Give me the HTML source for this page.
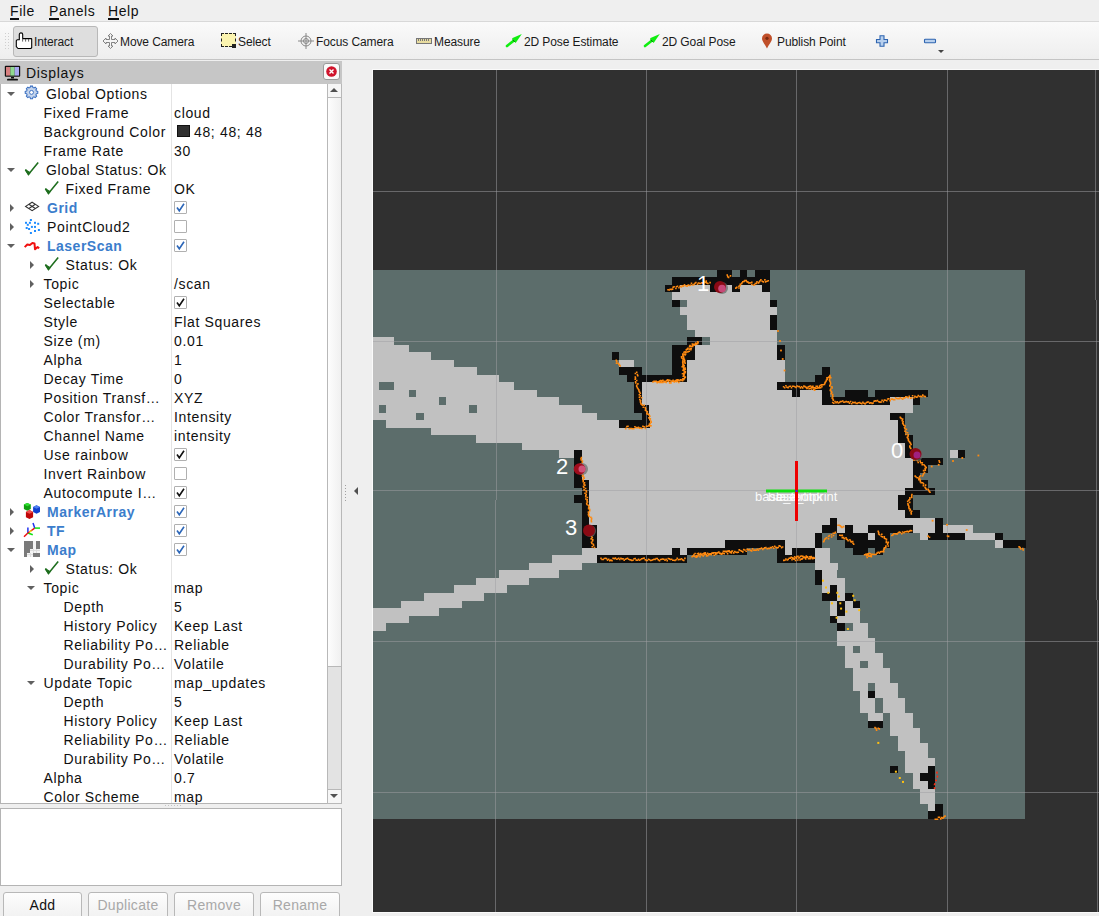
<!DOCTYPE html>
<html><head><meta charset="utf-8">
<style>
*{box-sizing:border-box;margin:0;padding:0}
html,body{width:1099px;height:916px;overflow:hidden;background:#efefef;font-family:"Liberation Sans",sans-serif;color:#000;position:relative}
.a{position:absolute;white-space:nowrap}
#menu{position:absolute;left:0;top:0;width:1099px;height:21px;background:#efefef}
#menu span{position:absolute;top:2px;font-size:14px;line-height:19px;letter-spacing:0.6px;color:#101010}
#menu u{text-decoration:none;border-bottom:2px solid #101010;display:inline-block;line-height:14px}
#menuline{position:absolute;left:0;top:21px;width:1099px;height:1px;background:#d8d8d8}
#tb{position:absolute;left:0;top:22px;width:1099px;height:37px;background:linear-gradient(#fafafa,#eeeeee)}
#tbline{position:absolute;left:0;top:59px;width:1099px;height:1px;background:#c4c4c4}
.tt{position:absolute;top:34px;font-size:12px;line-height:16px;letter-spacing:-0.1px;color:#1a1a1a;white-space:nowrap}
.ti{position:absolute}
#title{position:absolute;left:0;top:61px;width:342px;height:23px;background:#c6c6c6}
#tree{position:absolute;left:0;top:84px;width:342px;height:720px;background:#fff;border:1px solid #b4b4b4;border-top:none;overflow:hidden}
.r{position:absolute;font-size:14px;line-height:19px;letter-spacing:0.65px;color:#101010;white-space:nowrap}
.b{font-weight:bold;color:#3b7dcc;letter-spacing:0.5px}
.cb{position:absolute;left:174px;width:13px;height:13px;border:1px solid #b0b0b0;background:#fff;border-radius:1px}
.ar{position:absolute;width:0;height:0}
.dn{border-left:4px solid transparent;border-right:4px solid transparent;border-top:4px solid #606060}
.rt{border-top:4px solid transparent;border-bottom:4px solid transparent;border-left:4px solid #606060}
.btn{position:absolute;top:892px;height:30px;border:1px solid #b8b8b8;border-radius:3px;background:linear-gradient(#fdfdfd,#f0f0f0);font-size:14px;line-height:24px;text-align:center;letter-spacing:0.3px}
</style></head><body>
<div id="menu">
<span style="left:10px"><u>F</u>ile</span>
<span style="left:49px"><u>P</u>anels</span>
<span style="left:108px"><u>H</u>elp</span>
</div>
<div id="menuline"></div>
<div id="tb"></div>
<div id="tbline"></div>
<!-- toolbar grip -->
<div class="a" style="left:4px;top:32px;width:6px;height:18px;background-image:radial-gradient(circle at 1.5px 1.5px,#cfcfcf 0.7px,transparent 0.9px);background-size:3px 3px"></div>
<div class="a" style="left:13px;top:26px;width:85px;height:31px;border:1px solid #b8b8b8;border-radius:3px;background:#dedede"></div>
<svg class="ti" style="left:14px;top:32px" width="20" height="18" viewBox="14 32 20 18"><path d="M19.3 39.8V34.6a1.7 1.7 0 0 1 3.4 0V38.6H31.2a0.5 0.5 0 0 1 0.5 0.5V47.6L30.8 48.5H18L16.3 46.6V40.6L17.1 39.8z" fill="#fff" stroke="#000" stroke-width="1.1" stroke-linejoin="round"/><path d="M22.6 39V41.6M25.6 39V41.6M28.6 39V41.6" stroke="#555" stroke-width="0.9"/></svg>
<div class="tt" style="left:34px">Interact</div>
<svg class="ti" style="left:102px;top:33px" width="17" height="16" viewBox="0 0 17 16"><g fill="#f4f4f4" stroke="#777" stroke-width="0.9"><path d="M8.5 0.5L11 3H9.5V6.5H13V5L16 8L13 11V9.5H9.5V13H11L8.5 15.5L6 13H7.5V9.5H4V11L1 8L4 5V6.5H7.5V3H6z"/></g></svg>
<div class="tt" style="left:120px">Move Camera</div>
<div class="a" style="left:221px;top:33px;width:15px;height:14px;background:#fbf4b0;border:1px dashed #222"></div>
<div class="a" style="left:232px;top:44px;width:4px;height:4px;background:#222"></div>
<div class="tt" style="left:238px">Select</div>
<svg class="ti" style="left:297px;top:32px" width="18" height="18" viewBox="0 0 18 18"><g fill="none" stroke="#888" stroke-width="1"><circle cx="9" cy="9" r="5"/><circle cx="9" cy="9" r="2.5"/><path d="M9 1V17M1 9H17"/></g></svg>
<div class="tt" style="left:316px">Focus Camera</div>
<div class="a" style="left:416px;top:38px;width:16px;height:6px;background:#e8dca0;border:1px solid #777"></div>
<div class="a" style="left:418px;top:38px;width:12px;height:3px;background-image:linear-gradient(90deg,#777 1px,transparent 1px);background-size:2px 3px"></div>
<div class="tt" style="left:434px">Measure</div>
<svg class="ti" style="left:505px;top:33px" width="18" height="16" viewBox="505 33 18 16"><path d="M507 46L514 40.5" stroke="#10ee10" stroke-width="2.6" stroke-linecap="round"/><path d="M512 38.2L521.8 34L515.6 43z" fill="#10ee10"/><path d="M512.5 39.5L514.8 42" stroke="#0a7a0a" stroke-width="1"/></svg>
<div class="tt" style="left:524px">2D Pose Estimate</div>
<svg class="ti" style="left:643px;top:33px" width="18" height="16" viewBox="505 33 18 16"><path d="M507 46L514 40.5" stroke="#10ee10" stroke-width="2.6" stroke-linecap="round"/><path d="M512 38.2L521.8 34L515.6 43z" fill="#10ee10"/><path d="M512.5 39.5L514.8 42" stroke="#0a7a0a" stroke-width="1"/></svg>
<div class="tt" style="left:662px">2D Goal Pose</div>
<svg class="ti" style="left:761px;top:33px" width="12" height="16" viewBox="0 0 12 16"><path d="M6 15.5C4 11 1 8.5 1 5.5a5 5 0 0 1 10 0C11 8.5 8 11 6 15.5z" fill="#c0502a"/><circle cx="6" cy="5.3" r="1.6" fill="#7a2a10"/></svg>
<div class="tt" style="left:777px">Publish Point</div>
<svg class="ti" style="left:875px;top:34px" width="14" height="14" viewBox="875 34 14 14"><path d="M880 35.8H884V39.5H887.5V42.7H884V46.3H880V42.7H876.5V39.5H880z" fill="#b8d0ee" stroke="#2e64b0" stroke-width="1.1"/></svg>
<svg class="ti" style="left:923px;top:38px" width="14" height="6" viewBox="923 38 14 6"><rect x="924.5" y="39.3" width="11" height="3.4" rx="0.8" fill="#b8d0ee" stroke="#2e64b0" stroke-width="1.1"/></svg>
<div class="ar dn" style="left:938px;top:50px;border-width:3px 3px 0 3px;border-top-color:#444"></div>

<!-- Displays panel -->
<div id="title"></div>
<svg class="ti" style="left:4px;top:65px" width="17" height="16" viewBox="0 0 17 16"><rect x="0.8" y="0.8" width="15.4" height="11" rx="1" fill="#111"/><rect x="2" y="2" width="4.3" height="8.6" fill="#d88080"/><rect x="6.3" y="2" width="4.4" height="8.6" fill="#90d890"/><rect x="10.7" y="2" width="4.3" height="8.6" fill="#a8a8f0"/><path d="M7 12h3v1.5h-3z" fill="#111"/><rect x="3" y="13.8" width="11" height="1.8" rx="0.9" fill="#111"/></svg>
<div class="a" style="left:26px;top:64px;font-size:14px;line-height:19px;letter-spacing:0.7px;color:#101010">Displays</div>
<div class="a" style="left:323px;top:63px;width:17px;height:17px;border:1px solid #9a9a9a;border-radius:3px;background:#fafafa"></div>
<svg class="ti" style="left:325px;top:65px" width="13" height="13" viewBox="0 0 13 13"><circle cx="6.5" cy="6.5" r="5.3" fill="#d0142c"/><path d="M4.5 4.5L8.5 8.5M8.5 4.5L4.5 8.5" stroke="#fff" stroke-width="1.4"/></svg>
<div id="tree">
<div class="a" style="left:170px;top:0;width:1px;height:720px;background:#e4e4e4"></div>
</div>
<!-- scrollbar -->
<div class="a" style="left:327px;top:84px;width:15px;height:720px;background:#e3e3e3;border-left:1px solid #b8b8b8;border-right:1px solid #b8b8b8"></div>
<div class="a" style="left:327px;top:84px;width:15px;height:14px;background:#f6f6f6;border:1px solid #b8b8b8;border-top:none"></div>
<div class="ar" style="left:330px;top:88px;border-left:4.5px solid transparent;border-right:4.5px solid transparent;border-bottom:4px solid #505050"></div>
<div class="a" style="left:327px;top:97px;width:15px;height:570px;background:linear-gradient(90deg,#fdfdfd,#f0f0f0);border:1px solid #b8b8b8"></div>
<div class="a" style="left:327px;top:789px;width:15px;height:15px;background:#f6f6f6;border:1px solid #b8b8b8"></div>
<div class="ar" style="left:330px;top:794px;border-left:4.5px solid transparent;border-right:4.5px solid transparent;border-top:4px solid #505050"></div>
<div class="ar dn" style="left:7px;top:92px"></div>
<div class="a" style="left:20px;top:84px;width:25px;height:19px"><svg width="25" height="19"><g transform="translate(11.5 8.4) scale(0.86) translate(-11.5 -9.4)"><path d="M10.3 2.1h2.4l.4 1.6 1.3.6 1.4-.9 1.7 1.7-.9 1.4.6 1.3 1.6.4v2.4l-1.6.4-.6 1.3.9 1.4-1.7 1.7-1.4-.9-1.3.6-.4 1.6h-2.4l-.4-1.6-1.3-.6-1.4.9-1.7-1.7.9-1.4-.6-1.3-1.6-.4V8.2l1.6-.4.6-1.3-.9-1.4 1.7-1.7 1.4.9 1.3-.6z" fill="#c4d4ec" stroke="#3a6fc0" stroke-width="1.2"/><circle cx="11.5" cy="9.4" r="2.3" fill="#fff" stroke="#3a6fc0" stroke-width="1.1"/></g></svg></div>
<div class="r" style="left:46px;top:85px">Global Options</div>
<div class="r" style="left:43.5px;top:104px">Fixed Frame</div>
<div class="r" style="left:174px;top:104px">cloud</div>
<div class="r" style="left:43.5px;top:123px">Background Color</div>
<div class="a" style="left:177px;top:125px;width:13px;height:12px;background:#303030;border:1px solid #111"></div>
<div class="r" style="left:194px;top:123px">48; 48; 48</div>
<div class="r" style="left:43.5px;top:142px">Frame Rate</div>
<div class="r" style="left:174px;top:142px">30</div>
<div class="ar dn" style="left:7px;top:168px"></div>
<div class="a" style="left:20px;top:160px;width:25px;height:19px"><svg width="25" height="19"><path d="M5.6 9.6L8.6 14.2L18.2 2.6" fill="none" stroke="#1e6e1e" stroke-width="1.6"/><path d="M5.3 9.8L8.4 14.6L10 12.6z" fill="#1e6e1e" stroke="#1e6e1e" stroke-width="1.2"/></svg></div>
<div class="r" style="left:46px;top:161px">Global Status: Ok</div>
<div class="a" style="left:39.5px;top:179px;width:25px;height:19px"><svg width="25" height="19"><path d="M5.6 9.6L8.6 14.2L18.2 2.6" fill="none" stroke="#1e6e1e" stroke-width="1.6"/><path d="M5.3 9.8L8.4 14.6L10 12.6z" fill="#1e6e1e" stroke="#1e6e1e" stroke-width="1.2"/></svg></div>
<div class="r" style="left:65.5px;top:180px">Fixed Frame</div>
<div class="r" style="left:174px;top:180px">OK</div>
<div class="ar rt" style="left:10px;top:204px"></div>
<div class="a" style="left:20px;top:198px;width:25px;height:19px"><svg width="25" height="19"><g fill="none" stroke="#333" stroke-width="1.1"><path d="M12.1 4.2L18.6 8.4L12.1 12.6L5.6 8.4z"/><path d="M8.85 6.3L15.35 10.5M15.35 6.3L8.85 10.5"/></g></svg></div>
<div class="r b" style="left:47px;top:199px">Grid</div>
<div class="cb" style="top:201px"><svg width="13" height="13" viewBox="0 0 13 13" style="position:absolute;left:-1px;top:-1px"><path d="M3 6.5L5.3 9.8L10 2.8" fill="none" stroke="#2c66b8" stroke-width="1.6"/></svg></div>
<div class="ar rt" style="left:10px;top:223px"></div>
<div class="a" style="left:20px;top:217px;width:25px;height:19px"><svg width="25" height="19"><g fill="#1e8cff"><rect x="9.9" y="2.0" width="2" height="2"/><rect x="5.0" y="4.8" width="2" height="2"/><rect x="8.9" y="4.8" width="2" height="2"/><rect x="14.0" y="4.8" width="2" height="2"/><rect x="17.2" y="5.8" width="2" height="2"/><rect x="6.8" y="6.8" width="2" height="2"/><rect x="10.9" y="8.9" width="2" height="2"/><rect x="14.0" y="8.9" width="2" height="2"/><rect x="5.7" y="10.0" width="2" height="2"/><rect x="8.1" y="11.0" width="2" height="2"/><rect x="17.9" y="12.0" width="2" height="2"/><rect x="14.0" y="13.0" width="2" height="2"/><rect x="9.9" y="15.0" width="2" height="2"/></g></svg></div>
<div class="r" style="left:47px;top:218px">PointCloud2</div>
<div class="cb" style="top:220px"></div>
<div class="ar dn" style="left:7px;top:244px"></div>
<div class="a" style="left:20px;top:236px;width:25px;height:19px"><svg width="25" height="19"><path d="M4.7 11.1L7.3 8.5L9.9 9L12.4 7L14.5 7.5L15 13.2L17.6 11.1L19.2 12.2" fill="none" stroke="#f01010" stroke-width="2" stroke-linejoin="round"/></svg></div>
<div class="r b" style="left:47px;top:237px">LaserScan</div>
<div class="cb" style="top:239px"><svg width="13" height="13" viewBox="0 0 13 13" style="position:absolute;left:-1px;top:-1px"><path d="M3 6.5L5.3 9.8L10 2.8" fill="none" stroke="#2c66b8" stroke-width="1.6"/></svg></div>
<div class="ar rt" style="left:30px;top:261px"></div>
<div class="a" style="left:39.5px;top:255px;width:25px;height:19px"><svg width="25" height="19"><path d="M5.6 9.6L8.6 14.2L18.2 2.6" fill="none" stroke="#1e6e1e" stroke-width="1.6"/><path d="M5.3 9.8L8.4 14.6L10 12.6z" fill="#1e6e1e" stroke="#1e6e1e" stroke-width="1.2"/></svg></div>
<div class="r" style="left:65.5px;top:256px">Status: Ok</div>
<div class="ar rt" style="left:30px;top:280px"></div>
<div class="r" style="left:43.5px;top:275px">Topic</div>
<div class="r" style="left:174px;top:275px">/scan</div>
<div class="r" style="left:43.5px;top:294px">Selectable</div>
<div class="cb" style="top:296px"><svg width="13" height="13" viewBox="0 0 13 13" style="position:absolute;left:-1px;top:-1px"><path d="M3 6.5L5.3 9.8L10 2.8" fill="none" stroke="#111" stroke-width="1.6"/></svg></div>
<div class="r" style="left:43.5px;top:313px">Style</div>
<div class="r" style="left:174px;top:313px">Flat Squares</div>
<div class="r" style="left:43.5px;top:332px">Size (m)</div>
<div class="r" style="left:174px;top:332px">0.01</div>
<div class="r" style="left:43.5px;top:351px">Alpha</div>
<div class="r" style="left:174px;top:351px">1</div>
<div class="r" style="left:43.5px;top:370px">Decay Time</div>
<div class="r" style="left:174px;top:370px">0</div>
<div class="r" style="left:43.5px;top:389px">Position Transf…</div>
<div class="r" style="left:174px;top:389px">XYZ</div>
<div class="r" style="left:43.5px;top:408px">Color Transfor…</div>
<div class="r" style="left:174px;top:408px">Intensity</div>
<div class="r" style="left:43.5px;top:427px">Channel Name</div>
<div class="r" style="left:174px;top:427px">intensity</div>
<div class="r" style="left:43.5px;top:446px">Use rainbow</div>
<div class="cb" style="top:448px"><svg width="13" height="13" viewBox="0 0 13 13" style="position:absolute;left:-1px;top:-1px"><path d="M3 6.5L5.3 9.8L10 2.8" fill="none" stroke="#111" stroke-width="1.6"/></svg></div>
<div class="r" style="left:43.5px;top:465px">Invert Rainbow</div>
<div class="cb" style="top:467px"></div>
<div class="r" style="left:43.5px;top:484px">Autocompute I…</div>
<div class="cb" style="top:486px"><svg width="13" height="13" viewBox="0 0 13 13" style="position:absolute;left:-1px;top:-1px"><path d="M3 6.5L5.3 9.8L10 2.8" fill="none" stroke="#111" stroke-width="1.6"/></svg></div>
<div class="ar rt" style="left:10px;top:508px"></div>
<div class="a" style="left:20px;top:502px;width:25px;height:19px"><svg width="25" height="19"><path d="M7.3 0.9L10.8 2.6V7.1L7.3 8.8L3.9 7.1V2.6z" fill="#10a010"/><path d="M7.3 0.9L10.8 2.6L7.3 4.3L3.9 2.6z" fill="#30e030"/><path d="M16.5 3.2L20 5V10L16.5 11.7L13.1 10V5z" fill="#1040d0"/><path d="M16.5 3.2L20 5L16.5 6.7L13.1 5z" fill="#5080f0"/><path d="M9.5 8.1L13.1 9.9V15.2L9.5 17L5.9 15.2V9.9z" fill="#c00808"/><path d="M9.5 8.1L13.1 9.9L9.5 11.7L5.9 9.9z" fill="#f05050"/></svg></div>
<div class="r b" style="left:47px;top:503px">MarkerArray</div>
<div class="cb" style="top:505px"><svg width="13" height="13" viewBox="0 0 13 13" style="position:absolute;left:-1px;top:-1px"><path d="M3 6.5L5.3 9.8L10 2.8" fill="none" stroke="#2c66b8" stroke-width="1.6"/></svg></div>
<div class="ar rt" style="left:10px;top:527px"></div>
<div class="a" style="left:20px;top:521px;width:25px;height:19px"><svg width="25" height="19"><g stroke-width="1.5" fill="none"><path d="M7.9 12V6.5" stroke="#2030f0"/><path d="M7.9 12L4 15.8" stroke="#f01010"/><path d="M7.9 12L12.8 13.7" stroke="#10e010"/><path d="M7.9 12L14.7 7.1" stroke="#f01010"/><path d="M9.5 11L11.5 9.5" stroke="#f0f010"/><path d="M14.7 7.1L13 2" stroke="#2030f0"/><path d="M14.7 7.1H20" stroke="#10e010"/></g></svg></div>
<div class="r b" style="left:47px;top:522px">TF</div>
<div class="cb" style="top:524px"><svg width="13" height="13" viewBox="0 0 13 13" style="position:absolute;left:-1px;top:-1px"><path d="M3 6.5L5.3 9.8L10 2.8" fill="none" stroke="#2c66b8" stroke-width="1.6"/></svg></div>
<div class="ar dn" style="left:7px;top:548px"></div>
<div class="a" style="left:20px;top:540px;width:25px;height:19px"><svg width="25" height="19" shape-rendering="crispEdges"><rect x="4" y="1" width="16" height="16" fill="#f4f4f4"/><g fill="#7a7a7a"><rect x="4" y="1" width="9" height="8"/><rect x="16" y="1" width="4" height="8"/><rect x="4" y="9" width="6" height="4"/><rect x="4" y="13" width="3" height="4"/><rect x="13" y="13" width="7" height="4"/></g><g fill="#ddd"><rect x="10" y="10" width="10" height="1"/><rect x="13" y="9" width="1" height="4"/><rect x="16" y="9" width="1" height="4"/><rect x="7" y="14" width="6" height="1"/><rect x="10" y="13" width="1" height="4"/></g></svg></div>
<div class="r b" style="left:47px;top:541px">Map</div>
<div class="cb" style="top:543px"><svg width="13" height="13" viewBox="0 0 13 13" style="position:absolute;left:-1px;top:-1px"><path d="M3 6.5L5.3 9.8L10 2.8" fill="none" stroke="#2c66b8" stroke-width="1.6"/></svg></div>
<div class="ar rt" style="left:30px;top:565px"></div>
<div class="a" style="left:39.5px;top:559px;width:25px;height:19px"><svg width="25" height="19"><path d="M5.6 9.6L8.6 14.2L18.2 2.6" fill="none" stroke="#1e6e1e" stroke-width="1.6"/><path d="M5.3 9.8L8.4 14.6L10 12.6z" fill="#1e6e1e" stroke="#1e6e1e" stroke-width="1.2"/></svg></div>
<div class="r" style="left:65.5px;top:560px">Status: Ok</div>
<div class="ar dn" style="left:27px;top:586px"></div>
<div class="r" style="left:43.5px;top:579px">Topic</div>
<div class="r" style="left:174px;top:579px">map</div>
<div class="r" style="left:63.5px;top:598px">Depth</div>
<div class="r" style="left:174px;top:598px">5</div>
<div class="r" style="left:63.5px;top:617px">History Policy</div>
<div class="r" style="left:174px;top:617px">Keep Last</div>
<div class="r" style="left:63.5px;top:636px">Reliability Po…</div>
<div class="r" style="left:174px;top:636px">Reliable</div>
<div class="r" style="left:63.5px;top:655px">Durability Po…</div>
<div class="r" style="left:174px;top:655px">Volatile</div>
<div class="ar dn" style="left:27px;top:681px"></div>
<div class="r" style="left:43.5px;top:674px">Update Topic</div>
<div class="r" style="left:174px;top:674px">map_updates</div>
<div class="r" style="left:63.5px;top:693px">Depth</div>
<div class="r" style="left:174px;top:693px">5</div>
<div class="r" style="left:63.5px;top:712px">History Policy</div>
<div class="r" style="left:174px;top:712px">Keep Last</div>
<div class="r" style="left:63.5px;top:731px">Reliability Po…</div>
<div class="r" style="left:174px;top:731px">Reliable</div>
<div class="r" style="left:63.5px;top:750px">Durability Po…</div>
<div class="r" style="left:174px;top:750px">Volatile</div>
<div class="r" style="left:43.5px;top:769px">Alpha</div>
<div class="r" style="left:174px;top:769px">0.7</div>
<div class="r" style="left:43.5px;top:788px">Color Scheme</div>
<div class="r" style="left:174px;top:788px">map</div>
<!-- splitter dots -->
<div class="a" style="left:164px;top:804px;width:18px;height:3px;background-image:radial-gradient(circle at 1.5px 1.5px,#c4c4c4 0.6px,transparent 0.8px);background-size:3px 3px"></div>
<div class="a" style="left:0;top:808px;width:342px;height:78px;background:#fff;border:1px solid #b4b4b4"></div>
<div class="btn" style="left:3px;width:79px;color:#111">Add</div>
<div class="btn" style="left:88px;width:80px;color:#a8a8a8">Duplicate</div>
<div class="btn" style="left:174px;width:80px;color:#a8a8a8">Remove</div>
<div class="btn" style="left:260px;width:80px;color:#a8a8a8">Rename</div>
<!-- splitter handle -->
<div class="a" style="left:344px;top:484px;width:3px;height:17px;background-image:radial-gradient(circle,#a0a0a0 0.7px,transparent 0.8px);background-size:3px 3px"></div>
<div class="ar" style="left:354px;top:487px;border-top:4px solid transparent;border-bottom:4px solid transparent;border-right:4px solid #505050"></div>

<!-- 3D view -->
<div class="a" style="left:372px;top:69px;width:727px;height:844px;background:#fafafa"></div>
<svg class="ti" style="left:373px;top:70px" width="726" height="842" viewBox="373 70 726 842" shape-rendering="crispEdges">
<rect x="373" y="70" width="726" height="842" fill="#303030"/>
<rect x="371.20" y="269.60" width="654.24" height="548.96" fill="#5c6d6b"/>
<path fill="#c1c1c1" d="M679.5 284.6h30.1v7.52h-30.1zM717.1 284.6h15.0v7.52h-15.0zM739.7 284.6h22.6v7.52h-22.6zM672.0 292.2h97.8v7.52h-97.8zM687.0 299.7h82.7v7.52h-82.7zM679.5 307.2h97.8v7.52h-97.8zM687.0 314.7h82.7v7.52h-82.7zM687.0 322.2h82.7v7.52h-82.7zM694.6 329.8h82.7v7.52h-82.7zM371.2 337.3h22.6v7.52h-22.6zM709.6 337.3h67.7v7.52h-67.7zM371.2 344.8h37.6v7.52h-37.6zM694.6 344.8h82.7v7.52h-82.7zM371.2 352.3h60.2v7.52h-60.2zM694.6 352.3h82.7v7.52h-82.7zM371.2 359.8h82.7v7.52h-82.7zM619.4 359.8h15.0v7.52h-15.0zM687.0 359.8h97.8v7.52h-97.8zM371.2 367.4h105.3v7.52h-105.3zM687.0 367.4h97.8v7.52h-97.8zM371.2 374.9h127.8v7.52h-127.8zM687.0 374.9h97.8v7.52h-97.8zM371.2 382.4h7.5v7.52h-7.5zM393.8 382.4h120.3v7.52h-120.3zM641.9 382.4h135.4v7.52h-135.4zM371.2 389.9h37.6v7.52h-37.6zM416.3 389.9h120.3v7.52h-120.3zM641.9 389.9h150.4v7.52h-150.4zM799.8 389.9h22.6v7.52h-22.6zM371.2 397.4h67.7v7.52h-67.7zM446.4 397.4h112.8v7.52h-112.8zM641.9 397.4h180.5v7.52h-180.5zM890.1 397.4h22.6v7.52h-22.6zM371.2 405.0h7.5v7.52h-7.5zM386.2 405.0h82.7v7.52h-82.7zM476.5 405.0h105.3v7.52h-105.3zM649.4 405.0h263.2v7.52h-263.2zM371.2 412.5h45.1v7.52h-45.1zM423.8 412.5h173.0v7.52h-173.0zM649.4 412.5h240.6v7.52h-240.6zM386.2 420.0h233.1v7.52h-233.1zM649.4 420.0h248.2v7.52h-248.2zM431.4 427.5h466.2v7.52h-466.2zM476.5 435.0h421.1v7.52h-421.1zM521.6 442.6h383.5v7.52h-383.5zM559.2 450.1h15.0v7.52h-15.0zM581.8 450.1h323.4v7.52h-323.4zM950.2 450.1h7.5v7.52h-7.5zM581.8 457.6h330.9v7.52h-330.9zM581.8 465.1h330.9v7.52h-330.9zM581.8 472.6h330.9v7.52h-330.9zM589.3 480.2h323.4v7.52h-323.4zM589.3 487.7h315.8v7.52h-315.8zM589.3 495.2h308.3v7.52h-308.3zM589.3 502.7h308.3v7.52h-308.3zM589.3 510.2h315.8v7.52h-315.8zM589.3 517.8h240.6v7.52h-240.6zM837.4 517.8h97.8v7.52h-97.8zM596.8 525.3h225.6v7.52h-225.6zM837.4 525.3h7.5v7.52h-7.5zM852.5 525.3h15.0v7.52h-15.0zM912.6 525.3h22.6v7.52h-22.6zM942.7 525.3h30.1v7.52h-30.1zM596.8 532.8h218.1v7.52h-218.1zM867.5 532.8h7.5v7.52h-7.5zM920.2 532.8h7.5v7.52h-7.5zM965.3 532.8h30.1v7.52h-30.1zM596.8 540.3h127.8v7.52h-127.8zM784.8 540.3h30.1v7.52h-30.1zM995.4 540.3h7.5v7.52h-7.5zM581.8 547.8h90.2v7.52h-90.2zM679.5 547.8h7.5v7.52h-7.5zM784.8 547.8h7.5v7.52h-7.5zM814.9 547.8h15.0v7.52h-15.0zM551.7 555.4h45.1v7.52h-45.1zM814.9 555.4h15.0v7.52h-15.0zM529.1 562.9h52.6v7.52h-52.6zM814.9 562.9h22.6v7.52h-22.6zM499.0 570.4h60.2v7.52h-60.2zM822.4 570.4h15.0v7.52h-15.0zM476.5 577.9h52.6v7.52h-52.6zM822.4 577.9h22.6v7.52h-22.6zM453.9 585.4h52.6v7.52h-52.6zM822.4 585.4h7.5v7.52h-7.5zM837.4 585.4h7.5v7.52h-7.5zM423.8 593.0h60.2v7.52h-60.2zM837.4 593.0h7.5v7.52h-7.5zM401.3 600.5h60.2v7.52h-60.2zM829.9 600.5h7.5v7.52h-7.5zM845.0 600.5h7.5v7.52h-7.5zM371.2 608.0h67.7v7.52h-67.7zM829.9 608.0h7.5v7.52h-7.5zM845.0 608.0h15.0v7.52h-15.0zM371.2 615.5h37.6v7.52h-37.6zM837.4 615.5h22.6v7.52h-22.6zM371.2 623.0h15.0v7.52h-15.0zM852.5 623.0h15.0v7.52h-15.0zM837.4 630.6h30.1v7.52h-30.1zM837.4 638.1h37.6v7.52h-37.6zM845.0 645.6h7.5v7.52h-7.5zM860.0 645.6h15.0v7.52h-15.0zM845.0 653.1h37.6v7.52h-37.6zM845.0 660.6h15.0v7.52h-15.0zM867.5 660.6h15.0v7.52h-15.0zM852.5 668.2h37.6v7.52h-37.6zM852.5 675.7h37.6v7.52h-37.6zM852.5 683.2h15.0v7.52h-15.0zM875.0 683.2h22.6v7.52h-22.6zM860.0 690.7h7.5v7.52h-7.5zM875.0 690.7h22.6v7.52h-22.6zM860.0 698.2h15.0v7.52h-15.0zM882.6 698.2h22.6v7.52h-22.6zM860.0 705.8h15.0v7.52h-15.0zM882.6 705.8h22.6v7.52h-22.6zM867.5 713.3h15.0v7.52h-15.0zM890.1 713.3h22.6v7.52h-22.6zM890.1 720.8h22.6v7.52h-22.6zM890.1 728.3h30.1v7.52h-30.1zM897.6 735.8h22.6v7.52h-22.6zM897.6 743.4h30.1v7.52h-30.1zM905.1 750.9h22.6v7.52h-22.6zM905.1 758.4h30.1v7.52h-30.1zM905.1 765.9h22.6v7.52h-22.6zM912.6 773.4h7.5v7.52h-7.5zM912.6 781.0h15.0v7.52h-15.0zM920.2 788.5h15.0v7.52h-15.0zM920.2 796.0h15.0v7.52h-15.0zM927.7 803.5h7.5v7.52h-7.5z"/>
<path fill="#0e0e0e" d="M717.1 269.6h15.0v7.52h-15.0zM739.7 269.6h7.5v7.52h-7.5zM754.7 269.6h15.0v7.52h-15.0zM672.0 277.1h97.8v7.52h-97.8zM664.5 284.6h15.0v7.52h-15.0zM709.6 284.6h7.5v7.52h-7.5zM732.2 284.6h7.5v7.52h-7.5zM762.2 284.6h7.5v7.52h-7.5zM672.0 299.7h7.5v7.52h-7.5zM769.8 299.7h7.5v7.52h-7.5zM769.8 314.7h7.5v7.52h-7.5zM769.8 322.2h7.5v7.52h-7.5zM687.0 337.3h15.0v7.52h-15.0zM672.0 344.8h22.6v7.52h-22.6zM777.3 344.8h7.5v7.52h-7.5zM611.8 352.3h7.5v7.52h-7.5zM672.0 352.3h22.6v7.52h-22.6zM777.3 352.3h7.5v7.52h-7.5zM672.0 359.8h15.0v7.52h-15.0zM619.4 367.4h22.6v7.52h-22.6zM672.0 367.4h15.0v7.52h-15.0zM822.4 367.4h7.5v7.52h-7.5zM626.9 374.9h60.2v7.52h-60.2zM814.9 374.9h15.0v7.52h-15.0zM634.4 382.4h7.5v7.52h-7.5zM777.3 382.4h52.6v7.52h-52.6zM634.4 389.9h7.5v7.52h-7.5zM792.3 389.9h7.5v7.52h-7.5zM822.4 389.9h7.5v7.52h-7.5zM845.0 389.9h22.6v7.52h-22.6zM875.0 389.9h52.6v7.52h-52.6zM634.4 397.4h7.5v7.52h-7.5zM822.4 397.4h67.7v7.52h-67.7zM912.6 397.4h7.5v7.52h-7.5zM634.4 405.0h15.0v7.52h-15.0zM641.9 412.5h7.5v7.52h-7.5zM890.1 412.5h15.0v7.52h-15.0zM619.4 420.0h30.1v7.52h-30.1zM897.6 420.0h7.5v7.52h-7.5zM897.6 427.5h7.5v7.52h-7.5zM897.6 435.0h15.0v7.52h-15.0zM905.1 442.6h7.5v7.52h-7.5zM574.2 450.1h7.5v7.52h-7.5zM905.1 450.1h15.0v7.52h-15.0zM957.8 450.1h7.5v7.52h-7.5zM574.2 457.6h7.5v7.52h-7.5zM912.6 457.6h30.1v7.52h-30.1zM574.2 465.1h7.5v7.52h-7.5zM912.6 465.1h15.0v7.52h-15.0zM574.2 472.6h7.5v7.52h-7.5zM912.6 472.6h7.5v7.52h-7.5zM574.2 480.2h15.0v7.52h-15.0zM912.6 480.2h15.0v7.52h-15.0zM581.8 487.7h7.5v7.52h-7.5zM905.1 487.7h30.1v7.52h-30.1zM574.2 495.2h15.0v7.52h-15.0zM897.6 495.2h15.0v7.52h-15.0zM581.8 502.7h7.5v7.52h-7.5zM897.6 502.7h15.0v7.52h-15.0zM581.8 510.2h7.5v7.52h-7.5zM905.1 510.2h15.0v7.52h-15.0zM581.8 517.8h7.5v7.52h-7.5zM829.9 517.8h7.5v7.52h-7.5zM935.2 517.8h7.5v7.52h-7.5zM581.8 525.3h15.0v7.52h-15.0zM822.4 525.3h15.0v7.52h-15.0zM845.0 525.3h7.5v7.52h-7.5zM867.5 525.3h45.1v7.52h-45.1zM935.2 525.3h7.5v7.52h-7.5zM581.8 532.8h15.0v7.52h-15.0zM814.9 532.8h7.5v7.52h-7.5zM837.4 532.8h30.1v7.52h-30.1zM875.0 532.8h15.0v7.52h-15.0zM927.7 532.8h37.6v7.52h-37.6zM995.4 532.8h7.5v7.52h-7.5zM581.8 540.3h15.0v7.52h-15.0zM724.6 540.3h60.2v7.52h-60.2zM814.9 540.3h7.5v7.52h-7.5zM845.0 540.3h45.1v7.52h-45.1zM1002.9 540.3h22.6v7.52h-22.6zM672.0 547.8h7.5v7.52h-7.5zM687.0 547.8h60.2v7.52h-60.2zM777.3 547.8h7.5v7.52h-7.5zM792.3 547.8h22.6v7.52h-22.6zM852.5 547.8h15.0v7.52h-15.0zM875.0 547.8h7.5v7.52h-7.5zM596.8 555.4h90.2v7.52h-90.2zM777.3 555.4h37.6v7.52h-37.6zM814.9 570.4h7.5v7.52h-7.5zM814.9 577.9h7.5v7.52h-7.5zM829.9 585.4h7.5v7.52h-7.5zM822.4 593.0h15.0v7.52h-15.0zM845.0 593.0h7.5v7.52h-7.5zM837.4 600.5h7.5v7.52h-7.5zM852.5 600.5h7.5v7.52h-7.5zM837.4 608.0h7.5v7.52h-7.5zM829.9 615.5h7.5v7.52h-7.5zM837.4 623.0h7.5v7.52h-7.5zM867.5 690.7h7.5v7.52h-7.5zM867.5 720.8h15.0v7.52h-15.0zM890.1 765.9h7.5v7.52h-7.5zM927.7 765.9h7.5v7.52h-7.5zM920.2 773.4h15.0v7.52h-15.0zM927.7 781.0h7.5v7.52h-7.5zM935.2 803.5h7.5v7.52h-7.5zM927.7 811.0h15.0v7.52h-15.0z"/>
<g shape-rendering="auto">
<g fill="#a0a0a4" fill-opacity="0.5">
<rect x="496" y="70" width="1" height="430"/><rect x="495" y="500" width="1" height="412"/><rect x="646" y="70" width="1" height="842"/><rect x="796" y="70" width="1" height="842"/><rect x="947" y="70" width="1" height="842"/><rect x="1095" y="70" width="1" height="230"/><rect x="1096" y="300" width="1" height="300"/><rect x="1097" y="600" width="1" height="312"/>
<rect x="373" y="191" width="726" height="1"/><rect x="373" y="341" width="726" height="1"/><rect x="373" y="490" width="726" height="1"/><rect x="373" y="641" width="726" height="1"/><rect x="373" y="792" width="726" height="1"/>
</g>
<path fill="#ff8a10" d="M667.2 288.9h1.6v1.6h-1.6zM668.5 289.2h1.6v1.6h-1.6zM669.4 288.4h1.6v1.6h-1.6zM670.7 288.6h1.6v1.6h-1.6zM671.8 288.3h1.6v1.6h-1.6zM672.3 286.5h1.6v1.6h-1.6zM673.3 286.0h1.6v1.6h-1.6zM675.1 287.7h1.6v1.6h-1.6zM675.7 285.9h1.6v1.6h-1.6zM676.7 285.4h1.6v1.6h-1.6zM678.2 287.0h1.6v1.6h-1.6zM679.2 285.4h1.6v1.6h-1.6zM680.5 286.2h1.6v1.6h-1.6zM681.5 285.1h1.6v1.6h-1.6zM682.7 285.3h1.6v1.6h-1.6zM683.7 283.9h1.6v1.6h-1.6zM685.1 285.0h1.6v1.6h-1.6zM686.3 285.4h1.6v1.6h-1.6zM687.4 284.3h1.6v1.6h-1.6zM688.6 284.7h1.6v1.6h-1.6zM689.8 284.4h1.6v1.6h-1.6zM690.7 282.6h1.6v1.6h-1.6zM692.1 284.2h1.6v1.6h-1.6zM693.3 283.6h1.6v1.6h-1.6zM694.2 282.6h1.6v1.6h-1.6zM695.1 281.7h1.6v1.6h-1.6zM696.7 283.5h1.6v1.6h-1.6zM697.6 282.2h1.6v1.6h-1.6zM698.8 282.6h1.6v1.6h-1.6zM700.0 282.7h1.6v1.6h-1.6zM701.0 282.0h1.6v1.6h-1.6zM702.3 282.3h1.6v1.6h-1.6zM703.0 280.7h1.6v1.6h-1.6zM704.4 281.4h1.6v1.6h-1.6zM705.4 280.3h1.6v1.6h-1.6zM705.8 282.1h1.6v1.6h-1.6zM707.1 282.7h1.6v1.6h-1.6zM709.3 281.8h1.6v1.6h-1.6zM735.0 287.3h1.6v1.6h-1.6zM736.0 286.6h1.6v1.6h-1.6zM738.2 287.2h1.6v1.6h-1.6zM738.1 285.4h1.6v1.6h-1.6zM739.2 284.9h1.6v1.6h-1.6zM739.5 283.5h1.6v1.6h-1.6zM740.7 283.0h1.6v1.6h-1.6zM741.3 281.9h1.6v1.6h-1.6zM742.0 281.0h1.6v1.6h-1.6zM743.3 280.6h1.6v1.6h-1.6zM744.1 279.8h1.6v1.6h-1.6zM744.3 279.7h1.6v1.6h-1.6zM745.5 279.8h1.6v1.6h-1.6zM746.1 280.9h1.6v1.6h-1.6zM747.2 281.3h1.6v1.6h-1.6zM747.9 282.2h1.6v1.6h-1.6zM749.3 282.1h1.6v1.6h-1.6zM751.0 281.5h1.6v1.6h-1.6zM751.0 283.6h1.6v1.6h-1.6zM752.9 284.5h1.6v1.6h-1.6zM753.8 284.0h1.6v1.6h-1.6zM754.5 282.7h1.6v1.6h-1.6zM755.7 282.6h1.6v1.6h-1.6zM756.2 281.0h1.6v1.6h-1.6zM757.8 282.1h1.6v1.6h-1.6zM758.6 281.0h1.6v1.6h-1.6zM759.3 279.9h1.6v1.6h-1.6zM760.1 279.0h1.6v1.6h-1.6zM761.4 280.5h1.6v1.6h-1.6zM762.5 281.1h1.6v1.6h-1.6zM764.1 279.1h1.6v1.6h-1.6zM764.8 281.1h1.6v1.6h-1.6zM766.2 280.4h1.6v1.6h-1.6zM767.5 280.0h1.6v1.6h-1.6zM726.4 274.2h1.6v1.6h-1.6zM726.9 275.8h1.6v1.6h-1.6zM727.8 276.6h1.6v1.6h-1.6zM729.7 275.1h1.6v1.6h-1.6zM696.8 340.9h1.6v1.6h-1.6zM696.9 342.7h1.6v1.6h-1.6zM694.9 342.2h1.6v1.6h-1.6zM694.7 343.7h1.6v1.6h-1.6zM692.9 343.4h1.6v1.6h-1.6zM691.9 344.0h1.6v1.6h-1.6zM691.9 345.7h1.6v1.6h-1.6zM690.2 345.5h1.6v1.6h-1.6zM690.5 347.6h1.6v1.6h-1.6zM690.1 348.8h1.6v1.6h-1.6zM688.3 348.5h1.6v1.6h-1.6zM688.5 350.4h1.6v1.6h-1.6zM687.4 350.8h1.6v1.6h-1.6zM686.2 351.2h1.6v1.6h-1.6zM685.0 351.5h1.6v1.6h-1.6zM684.9 353.2h1.6v1.6h-1.6zM684.3 354.2h1.6v1.6h-1.6zM682.0 353.3h1.6v1.6h-1.6zM682.3 354.8h1.6v1.6h-1.6zM680.7 356.0h1.6v1.6h-1.6zM680.9 357.1h1.6v1.6h-1.6zM682.3 358.1h1.6v1.6h-1.6zM682.2 359.2h1.6v1.6h-1.6zM682.1 360.3h1.6v1.6h-1.6zM681.9 361.5h1.6v1.6h-1.6zM682.1 362.6h1.6v1.6h-1.6zM682.2 363.7h1.6v1.6h-1.6zM682.1 364.8h1.6v1.6h-1.6zM681.4 366.0h1.6v1.6h-1.6zM682.6 367.0h1.6v1.6h-1.6zM682.9 368.2h1.6v1.6h-1.6zM682.2 369.4h1.6v1.6h-1.6zM683.5 370.5h1.6v1.6h-1.6zM683.4 371.7h1.6v1.6h-1.6zM681.7 373.0h1.6v1.6h-1.6zM683.0 374.1h1.6v1.6h-1.6zM683.0 375.3h1.6v1.6h-1.6zM684.5 376.3h1.6v1.6h-1.6zM683.4 377.8h1.6v1.6h-1.6zM682.1 378.0h1.6v1.6h-1.6zM681.8 379.9h1.6v1.6h-1.6zM680.0 379.1h1.6v1.6h-1.6zM678.9 379.7h1.6v1.6h-1.6zM678.0 381.7h1.6v1.6h-1.6zM676.8 380.3h1.6v1.6h-1.6zM675.7 380.8h1.6v1.6h-1.6zM674.6 380.3h1.6v1.6h-1.6zM673.5 381.1h1.6v1.6h-1.6zM672.3 380.3h1.6v1.6h-1.6zM671.1 380.2h1.6v1.6h-1.6zM670.1 382.1h1.6v1.6h-1.6zM668.9 382.1h1.6v1.6h-1.6zM667.7 380.5h1.6v1.6h-1.6zM666.6 379.8h1.6v1.6h-1.6zM665.5 381.7h1.6v1.6h-1.6zM664.3 381.2h1.6v1.6h-1.6zM663.2 380.9h1.6v1.6h-1.6zM662.1 381.6h1.6v1.6h-1.6zM660.9 381.6h1.6v1.6h-1.6zM659.8 381.7h1.6v1.6h-1.6zM658.6 381.6h1.6v1.6h-1.6zM657.5 381.1h1.6v1.6h-1.6zM656.4 381.9h1.6v1.6h-1.6zM782.8 385.9h1.6v1.6h-1.6zM783.9 386.9h1.6v1.6h-1.6zM785.1 385.0h1.6v1.6h-1.6zM786.2 386.4h1.6v1.6h-1.6zM787.3 386.8h1.6v1.6h-1.6zM788.4 385.7h1.6v1.6h-1.6zM789.6 385.5h1.6v1.6h-1.6zM790.7 387.0h1.6v1.6h-1.6zM791.8 385.5h1.6v1.6h-1.6zM792.9 385.4h1.6v1.6h-1.6zM794.1 386.0h1.6v1.6h-1.6zM795.2 386.7h1.6v1.6h-1.6zM796.3 385.2h1.6v1.6h-1.6zM797.4 385.7h1.6v1.6h-1.6zM798.6 385.8h1.6v1.6h-1.6zM799.7 387.1h1.6v1.6h-1.6zM800.8 386.0h1.6v1.6h-1.6zM801.9 387.1h1.6v1.6h-1.6zM803.1 385.3h1.6v1.6h-1.6zM804.2 385.8h1.6v1.6h-1.6zM805.3 386.6h1.6v1.6h-1.6zM806.4 387.2h1.6v1.6h-1.6zM807.6 386.1h1.6v1.6h-1.6zM808.7 385.5h1.6v1.6h-1.6zM809.8 385.2h1.6v1.6h-1.6zM810.9 386.3h1.6v1.6h-1.6zM812.1 385.4h1.6v1.6h-1.6zM813.2 387.0h1.6v1.6h-1.6zM814.3 387.1h1.6v1.6h-1.6zM815.4 385.4h1.6v1.6h-1.6zM816.6 385.6h1.6v1.6h-1.6zM817.7 387.0h1.6v1.6h-1.6zM818.8 386.6h1.6v1.6h-1.6zM819.9 387.0h1.6v1.6h-1.6zM821.1 385.8h1.6v1.6h-1.6zM615.5 359.6h1.6v1.6h-1.6zM616.0 360.7h1.6v1.6h-1.6zM615.7 362.4h1.6v1.6h-1.6zM617.5 362.4h1.6v1.6h-1.6zM618.1 363.4h1.6v1.6h-1.6zM618.7 364.3h1.6v1.6h-1.6zM619.4 365.2h1.6v1.6h-1.6zM635.9 371.5h1.6v1.6h-1.6zM634.6 372.7h1.6v1.6h-1.6zM636.6 373.8h1.6v1.6h-1.6zM637.0 375.0h1.6v1.6h-1.6zM634.5 376.2h1.6v1.6h-1.6zM634.7 377.4h1.6v1.6h-1.6zM634.4 378.5h1.6v1.6h-1.6zM635.9 379.7h1.6v1.6h-1.6zM634.8 381.1h1.6v1.6h-1.6zM635.0 382.2h1.6v1.6h-1.6zM637.1 383.1h1.6v1.6h-1.6zM635.9 384.5h1.6v1.6h-1.6zM635.9 385.7h1.6v1.6h-1.6zM636.6 386.8h1.6v1.6h-1.6zM637.2 387.9h1.6v1.6h-1.6zM638.0 389.0h1.6v1.6h-1.6zM638.2 390.2h1.6v1.6h-1.6zM638.8 391.3h1.6v1.6h-1.6zM639.5 392.4h1.6v1.6h-1.6zM638.5 394.0h1.6v1.6h-1.6zM639.6 394.9h1.6v1.6h-1.6zM638.6 396.4h1.6v1.6h-1.6zM640.8 397.0h1.6v1.6h-1.6zM639.0 398.8h1.6v1.6h-1.6zM639.9 399.8h1.6v1.6h-1.6zM639.6 401.1h1.6v1.6h-1.6zM640.0 402.2h1.6v1.6h-1.6zM640.4 403.3h1.6v1.6h-1.6zM641.5 404.3h1.6v1.6h-1.6zM643.4 404.5h1.6v1.6h-1.6zM642.5 406.5h1.6v1.6h-1.6zM644.4 406.7h1.6v1.6h-1.6zM644.8 407.9h1.6v1.6h-1.6zM644.6 409.4h1.6v1.6h-1.6zM645.6 410.2h1.6v1.6h-1.6zM646.5 411.1h1.6v1.6h-1.6zM646.0 412.8h1.6v1.6h-1.6zM647.3 413.3h1.6v1.6h-1.6zM648.4 414.3h1.6v1.6h-1.6zM649.1 415.4h1.6v1.6h-1.6zM648.1 417.1h1.6v1.6h-1.6zM649.5 418.0h1.6v1.6h-1.6zM649.2 419.1h1.6v1.6h-1.6zM650.2 420.4h1.6v1.6h-1.6zM650.4 421.5h1.6v1.6h-1.6zM649.5 422.6h1.6v1.6h-1.6zM648.6 423.6h1.6v1.6h-1.6zM650.2 425.0h1.6v1.6h-1.6zM649.1 425.2h1.6v1.6h-1.6zM648.0 425.0h1.6v1.6h-1.6zM646.8 425.4h1.6v1.6h-1.6zM645.6 425.4h1.6v1.6h-1.6zM644.6 427.6h1.6v1.6h-1.6zM643.3 426.1h1.6v1.6h-1.6zM642.1 425.5h1.6v1.6h-1.6zM641.1 427.7h1.6v1.6h-1.6zM639.9 427.2h1.6v1.6h-1.6zM638.7 427.3h1.6v1.6h-1.6zM637.6 426.6h1.6v1.6h-1.6zM636.4 426.9h1.6v1.6h-1.6zM635.3 426.8h1.6v1.6h-1.6zM634.1 426.0h1.6v1.6h-1.6zM633.0 428.0h1.6v1.6h-1.6zM631.8 427.9h1.6v1.6h-1.6zM630.7 427.7h1.6v1.6h-1.6zM629.5 427.7h1.6v1.6h-1.6zM628.4 427.8h1.6v1.6h-1.6zM627.2 425.5h1.6v1.6h-1.6zM626.1 425.8h1.6v1.6h-1.6zM624.9 427.8h1.6v1.6h-1.6zM652.1 381.2h1.6v1.6h-1.6zM653.2 380.6h1.6v1.6h-1.6zM654.3 380.6h1.6v1.6h-1.6zM655.4 380.6h1.6v1.6h-1.6zM656.6 381.3h1.6v1.6h-1.6zM657.7 381.0h1.6v1.6h-1.6zM658.8 380.3h1.6v1.6h-1.6zM659.9 379.8h1.6v1.6h-1.6zM661.0 380.1h1.6v1.6h-1.6zM662.1 379.5h1.6v1.6h-1.6zM663.3 380.5h1.6v1.6h-1.6zM664.5 380.9h1.6v1.6h-1.6zM665.5 379.9h1.6v1.6h-1.6zM666.6 379.0h1.6v1.6h-1.6zM667.7 379.2h1.6v1.6h-1.6zM668.9 379.6h1.6v1.6h-1.6zM670.1 380.2h1.6v1.6h-1.6zM671.2 380.5h1.6v1.6h-1.6zM672.3 379.4h1.6v1.6h-1.6zM673.5 380.4h1.6v1.6h-1.6zM674.6 379.9h1.6v1.6h-1.6zM675.6 379.3h1.6v1.6h-1.6zM676.7 379.1h1.6v1.6h-1.6zM677.9 379.3h1.6v1.6h-1.6zM679.1 379.8h1.6v1.6h-1.6zM680.1 378.9h1.6v1.6h-1.6zM681.3 379.6h1.6v1.6h-1.6zM682.4 378.9h1.6v1.6h-1.6zM682.8 378.9h1.6v1.6h-1.6zM683.6 377.7h1.6v1.6h-1.6zM684.0 376.6h1.6v1.6h-1.6zM682.4 375.4h1.6v1.6h-1.6zM683.3 374.2h1.6v1.6h-1.6zM683.3 373.0h1.6v1.6h-1.6zM684.5 371.9h1.6v1.6h-1.6zM684.6 370.7h1.6v1.6h-1.6zM683.2 369.5h1.6v1.6h-1.6zM684.5 368.4h1.6v1.6h-1.6zM684.3 367.2h1.6v1.6h-1.6zM682.9 366.0h1.6v1.6h-1.6zM683.4 364.8h1.6v1.6h-1.6zM682.5 363.7h1.6v1.6h-1.6zM684.3 362.3h1.6v1.6h-1.6zM683.7 361.2h1.6v1.6h-1.6zM684.0 359.8h1.6v1.6h-1.6zM683.5 358.6h1.6v1.6h-1.6zM682.9 357.5h1.6v1.6h-1.6zM682.8 356.2h1.6v1.6h-1.6zM682.1 355.2h1.6v1.6h-1.6zM682.0 353.6h1.6v1.6h-1.6zM683.7 353.5h1.6v1.6h-1.6zM683.2 351.6h1.6v1.6h-1.6zM684.3 351.0h1.6v1.6h-1.6zM686.3 351.2h1.6v1.6h-1.6zM685.5 349.1h1.6v1.6h-1.6zM686.4 348.3h1.6v1.6h-1.6zM687.1 347.4h1.6v1.6h-1.6zM689.4 347.9h1.6v1.6h-1.6zM688.8 345.8h1.6v1.6h-1.6zM689.2 344.7h1.6v1.6h-1.6zM691.3 345.4h1.6v1.6h-1.6zM691.5 343.2h1.6v1.6h-1.6zM693.4 344.3h1.6v1.6h-1.6zM694.2 343.4h1.6v1.6h-1.6zM695.5 343.3h1.6v1.6h-1.6zM696.6 343.0h1.6v1.6h-1.6zM697.3 341.6h1.6v1.6h-1.6zM806.1 387.7h1.6v1.6h-1.6zM807.5 385.9h1.6v1.6h-1.6zM808.3 388.0h1.6v1.6h-1.6zM809.6 387.5h1.6v1.6h-1.6zM810.6 388.2h1.6v1.6h-1.6zM812.0 386.8h1.6v1.6h-1.6zM812.8 388.7h1.6v1.6h-1.6zM813.9 389.3h1.6v1.6h-1.6zM814.6 387.4h1.6v1.6h-1.6zM816.0 387.4h1.6v1.6h-1.6zM817.3 387.2h1.6v1.6h-1.6zM818.7 387.1h1.6v1.6h-1.6zM818.9 385.2h1.6v1.6h-1.6zM819.8 384.4h1.6v1.6h-1.6zM820.9 383.9h1.6v1.6h-1.6zM822.4 384.0h1.6v1.6h-1.6zM823.7 383.6h1.6v1.6h-1.6zM824.1 382.3h1.6v1.6h-1.6zM824.6 381.3h1.6v1.6h-1.6zM825.2 380.4h1.6v1.6h-1.6zM825.7 379.3h1.6v1.6h-1.6zM826.4 378.5h1.6v1.6h-1.6zM826.2 377.1h1.6v1.6h-1.6zM827.8 376.7h1.6v1.6h-1.6zM829.4 376.4h1.6v1.6h-1.6zM829.1 374.8h1.6v1.6h-1.6zM828.4 376.0h1.6v1.6h-1.6zM830.0 377.0h1.6v1.6h-1.6zM828.8 378.3h1.6v1.6h-1.6zM828.7 379.4h1.6v1.6h-1.6zM829.1 380.5h1.6v1.6h-1.6zM829.6 381.6h1.6v1.6h-1.6zM829.8 382.7h1.6v1.6h-1.6zM829.5 383.9h1.6v1.6h-1.6zM829.0 385.1h1.6v1.6h-1.6zM831.1 386.0h1.6v1.6h-1.6zM831.3 387.2h1.6v1.6h-1.6zM829.8 388.5h1.6v1.6h-1.6zM829.5 389.6h1.6v1.6h-1.6zM830.6 390.6h1.6v1.6h-1.6zM831.0 391.7h1.6v1.6h-1.6zM830.4 392.9h1.6v1.6h-1.6zM831.9 393.8h1.6v1.6h-1.6zM831.8 394.9h1.6v1.6h-1.6zM832.1 396.0h1.6v1.6h-1.6zM831.3 397.2h1.6v1.6h-1.6zM832.1 398.2h1.6v1.6h-1.6zM832.5 399.3h1.6v1.6h-1.6zM831.9 401.7h1.6v1.6h-1.6zM833.0 402.4h1.6v1.6h-1.6zM834.2 400.7h1.6v1.6h-1.6zM835.2 401.8h1.6v1.6h-1.6zM836.4 401.1h1.6v1.6h-1.6zM837.5 402.2h1.6v1.6h-1.6zM838.6 401.6h1.6v1.6h-1.6zM839.7 400.8h1.6v1.6h-1.6zM840.9 400.7h1.6v1.6h-1.6zM842.0 400.2h1.6v1.6h-1.6zM843.1 401.4h1.6v1.6h-1.6zM844.2 401.2h1.6v1.6h-1.6zM845.4 400.7h1.6v1.6h-1.6zM846.5 401.2h1.6v1.6h-1.6zM847.6 401.1h1.6v1.6h-1.6zM848.7 402.3h1.6v1.6h-1.6zM849.8 400.7h1.6v1.6h-1.6zM850.9 402.9h1.6v1.6h-1.6zM852.0 401.6h1.6v1.6h-1.6zM853.2 401.9h1.6v1.6h-1.6zM854.3 401.6h1.6v1.6h-1.6zM855.4 402.6h1.6v1.6h-1.6zM856.5 402.6h1.6v1.6h-1.6zM857.6 401.9h1.6v1.6h-1.6zM858.8 401.8h1.6v1.6h-1.6zM859.9 402.4h1.6v1.6h-1.6zM861.0 402.8h1.6v1.6h-1.6zM862.1 401.6h1.6v1.6h-1.6zM863.2 402.5h1.6v1.6h-1.6zM864.3 403.1h1.6v1.6h-1.6zM865.5 401.9h1.6v1.6h-1.6zM866.5 401.3h1.6v1.6h-1.6zM867.6 401.2h1.6v1.6h-1.6zM868.9 402.3h1.6v1.6h-1.6zM870.1 402.0h1.6v1.6h-1.6zM871.3 402.6h1.6v1.6h-1.6zM872.4 402.2h1.6v1.6h-1.6zM873.3 400.4h1.6v1.6h-1.6zM874.4 400.1h1.6v1.6h-1.6zM875.6 400.2h1.6v1.6h-1.6zM876.7 399.8h1.6v1.6h-1.6zM878.0 401.0h1.6v1.6h-1.6zM879.2 401.3h1.6v1.6h-1.6zM880.4 401.2h1.6v1.6h-1.6zM881.3 399.4h1.6v1.6h-1.6zM882.6 400.8h1.6v1.6h-1.6zM883.6 399.3h1.6v1.6h-1.6zM884.7 399.4h1.6v1.6h-1.6zM886.0 400.0h1.6v1.6h-1.6zM886.9 398.2h1.6v1.6h-1.6zM888.0 398.1h1.6v1.6h-1.6zM889.4 399.9h1.6v1.6h-1.6zM890.4 398.3h1.6v1.6h-1.6zM891.5 398.3h1.6v1.6h-1.6zM892.7 398.8h1.6v1.6h-1.6zM893.9 398.9h1.6v1.6h-1.6zM894.8 397.0h1.6v1.6h-1.6zM896.0 397.7h1.6v1.6h-1.6zM897.2 397.8h1.6v1.6h-1.6zM898.3 397.8h1.6v1.6h-1.6zM899.4 396.9h1.6v1.6h-1.6zM900.6 397.7h1.6v1.6h-1.6zM901.9 398.5h1.6v1.6h-1.6zM902.8 396.9h1.6v1.6h-1.6zM904.0 397.2h1.6v1.6h-1.6zM905.0 395.9h1.6v1.6h-1.6zM906.2 396.2h1.6v1.6h-1.6zM907.4 397.0h1.6v1.6h-1.6zM908.4 395.5h1.6v1.6h-1.6zM909.8 397.3h1.6v1.6h-1.6zM910.9 397.2h1.6v1.6h-1.6zM911.8 395.0h1.6v1.6h-1.6zM913.2 397.0h1.6v1.6h-1.6zM914.1 395.4h1.6v1.6h-1.6zM915.4 396.3h1.6v1.6h-1.6zM916.5 396.2h1.6v1.6h-1.6zM917.5 394.8h1.6v1.6h-1.6zM918.8 395.7h1.6v1.6h-1.6zM919.9 395.5h1.6v1.6h-1.6zM921.1 395.8h1.6v1.6h-1.6zM922.0 394.3h1.6v1.6h-1.6zM923.3 395.4h1.6v1.6h-1.6zM924.5 395.8h1.6v1.6h-1.6zM899.5 416.6h1.6v1.6h-1.6zM900.3 417.6h1.6v1.6h-1.6zM901.8 418.3h1.6v1.6h-1.6zM901.4 419.8h1.6v1.6h-1.6zM902.3 420.8h1.6v1.6h-1.6zM901.9 422.3h1.6v1.6h-1.6zM902.5 423.3h1.6v1.6h-1.6zM903.1 424.4h1.6v1.6h-1.6zM904.4 425.2h1.6v1.6h-1.6zM903.7 426.7h1.6v1.6h-1.6zM904.1 427.8h1.6v1.6h-1.6zM905.6 428.6h1.6v1.6h-1.6zM904.2 430.3h1.6v1.6h-1.6zM905.1 431.2h1.6v1.6h-1.6zM906.8 431.9h1.6v1.6h-1.6zM905.1 433.6h1.6v1.6h-1.6zM907.4 434.1h1.6v1.6h-1.6zM907.2 435.3h1.6v1.6h-1.6zM906.5 436.6h1.6v1.6h-1.6zM907.2 437.6h1.6v1.6h-1.6zM907.6 438.6h1.6v1.6h-1.6zM907.6 439.7h1.6v1.6h-1.6zM908.4 440.7h1.6v1.6h-1.6zM909.1 441.6h1.6v1.6h-1.6zM909.7 442.6h1.6v1.6h-1.6zM910.3 443.7h1.6v1.6h-1.6zM909.0 445.3h1.6v1.6h-1.6zM909.2 446.6h1.6v1.6h-1.6zM910.0 447.6h1.6v1.6h-1.6zM913.2 459.3h1.6v1.6h-1.6zM914.7 458.9h1.6v1.6h-1.6zM915.9 459.2h1.6v1.6h-1.6zM916.8 460.0h1.6v1.6h-1.6zM917.4 461.7h1.6v1.6h-1.6zM919.4 460.3h1.6v1.6h-1.6zM919.9 461.9h1.6v1.6h-1.6zM921.5 461.9h1.6v1.6h-1.6zM921.4 463.8h1.6v1.6h-1.6zM923.1 464.0h1.6v1.6h-1.6zM924.0 464.9h1.6v1.6h-1.6zM924.8 465.9h1.6v1.6h-1.6zM925.4 466.9h1.6v1.6h-1.6zM924.3 467.7h1.6v1.6h-1.6zM924.5 469.3h1.6v1.6h-1.6zM922.8 469.8h1.6v1.6h-1.6zM923.8 471.8h1.6v1.6h-1.6zM922.8 472.7h1.6v1.6h-1.6zM922.5 474.0h1.6v1.6h-1.6zM921.7 475.2h1.6v1.6h-1.6zM919.6 474.9h1.6v1.6h-1.6zM918.8 476.0h1.6v1.6h-1.6zM918.9 477.9h1.6v1.6h-1.6zM918.0 478.8h1.6v1.6h-1.6zM938.3 460.0h1.6v1.6h-1.6zM938.8 461.5h1.6v1.6h-1.6zM914.4 475.3h1.6v1.6h-1.6zM915.3 476.2h1.6v1.6h-1.6zM916.4 476.9h1.6v1.6h-1.6zM918.1 477.2h1.6v1.6h-1.6zM918.3 478.6h1.6v1.6h-1.6zM919.5 479.3h1.6v1.6h-1.6zM919.5 480.9h1.6v1.6h-1.6zM920.3 481.8h1.6v1.6h-1.6zM921.9 482.0h1.6v1.6h-1.6zM922.7 483.0h1.6v1.6h-1.6zM922.6 484.8h1.6v1.6h-1.6zM924.8 484.3h1.6v1.6h-1.6zM924.3 486.6h1.6v1.6h-1.6zM924.9 487.6h1.6v1.6h-1.6zM925.6 488.5h1.6v1.6h-1.6zM927.4 488.5h1.6v1.6h-1.6zM927.8 489.6h1.6v1.6h-1.6zM928.5 490.6h1.6v1.6h-1.6zM929.2 491.5h1.6v1.6h-1.6zM911.1 493.7h1.6v1.6h-1.6zM910.9 495.1h1.6v1.6h-1.6zM911.0 496.7h1.6v1.6h-1.6zM909.1 496.9h1.6v1.6h-1.6zM909.1 498.5h1.6v1.6h-1.6zM908.1 499.3h1.6v1.6h-1.6zM906.9 500.6h1.6v1.6h-1.6zM908.9 501.6h1.6v1.6h-1.6zM907.1 503.1h1.6v1.6h-1.6zM907.5 504.3h1.6v1.6h-1.6zM908.1 505.5h1.6v1.6h-1.6zM908.1 506.8h1.6v1.6h-1.6zM908.4 508.0h1.6v1.6h-1.6zM909.5 508.6h1.6v1.6h-1.6zM909.2 510.0h1.6v1.6h-1.6zM910.9 510.5h1.6v1.6h-1.6zM910.3 512.0h1.6v1.6h-1.6zM910.5 513.2h1.6v1.6h-1.6zM877.4 530.6h1.6v1.6h-1.6zM877.9 531.7h1.6v1.6h-1.6zM877.9 533.2h1.6v1.6h-1.6zM878.8 533.9h1.6v1.6h-1.6zM881.0 533.5h1.6v1.6h-1.6zM880.5 535.5h1.6v1.6h-1.6zM881.6 536.1h1.6v1.6h-1.6zM883.5 535.9h1.6v1.6h-1.6zM883.6 537.3h1.6v1.6h-1.6zM884.6 538.0h1.6v1.6h-1.6zM885.7 538.5h1.6v1.6h-1.6zM885.6 540.2h1.6v1.6h-1.6zM885.5 541.7h1.6v1.6h-1.6zM887.5 541.5h1.6v1.6h-1.6zM887.1 542.2h1.6v1.6h-1.6zM886.8 543.4h1.6v1.6h-1.6zM887.4 545.2h1.6v1.6h-1.6zM885.1 545.2h1.6v1.6h-1.6zM885.0 546.6h1.6v1.6h-1.6zM883.6 547.1h1.6v1.6h-1.6zM883.4 548.5h1.6v1.6h-1.6zM882.7 549.4h1.6v1.6h-1.6zM882.9 551.0h1.6v1.6h-1.6zM881.8 551.0h1.6v1.6h-1.6zM880.7 550.8h1.6v1.6h-1.6zM879.6 551.1h1.6v1.6h-1.6zM878.6 552.3h1.6v1.6h-1.6zM877.4 551.5h1.6v1.6h-1.6zM876.3 552.3h1.6v1.6h-1.6zM875.3 553.4h1.6v1.6h-1.6zM874.2 553.7h1.6v1.6h-1.6zM873.1 553.7h1.6v1.6h-1.6zM871.9 553.5h1.6v1.6h-1.6zM870.8 553.7h1.6v1.6h-1.6zM869.7 552.9h1.6v1.6h-1.6zM868.5 552.5h1.6v1.6h-1.6zM867.4 553.0h1.6v1.6h-1.6zM866.3 553.4h1.6v1.6h-1.6zM865.0 553.6h1.6v1.6h-1.6zM866.4 553.3h1.6v1.6h-1.6zM867.3 554.2h1.6v1.6h-1.6zM868.0 555.4h1.6v1.6h-1.6zM869.4 555.1h1.6v1.6h-1.6zM870.6 555.1h1.6v1.6h-1.6zM891.0 534.7h1.6v1.6h-1.6zM892.1 534.1h1.6v1.6h-1.6zM893.1 533.0h1.6v1.6h-1.6zM894.2 532.9h1.6v1.6h-1.6zM895.4 533.1h1.6v1.6h-1.6zM896.5 533.2h1.6v1.6h-1.6zM897.5 532.0h1.6v1.6h-1.6zM898.5 531.3h1.6v1.6h-1.6zM899.7 531.7h1.6v1.6h-1.6zM901.0 533.0h1.6v1.6h-1.6zM901.9 531.2h1.6v1.6h-1.6zM903.2 531.9h1.6v1.6h-1.6zM904.2 531.0h1.6v1.6h-1.6zM905.3 530.9h1.6v1.6h-1.6zM906.4 530.6h1.6v1.6h-1.6zM907.6 531.1h1.6v1.6h-1.6zM908.6 530.3h1.6v1.6h-1.6zM909.7 529.8h1.6v1.6h-1.6zM910.8 529.9h1.6v1.6h-1.6zM927.3 535.3h1.6v1.6h-1.6zM928.7 536.4h1.6v1.6h-1.6zM946.7 535.2h1.6v1.6h-1.6zM947.8 535.6h1.6v1.6h-1.6zM1018.3 546.1h1.6v1.6h-1.6zM1019.3 546.8h1.6v1.6h-1.6zM1019.9 548.2h1.6v1.6h-1.6zM1021.9 547.7h1.6v1.6h-1.6zM1022.4 549.2h1.6v1.6h-1.6zM693.2 553.7h1.6v1.6h-1.6zM694.3 552.7h1.6v1.6h-1.6zM695.6 555.1h1.6v1.6h-1.6zM696.6 553.0h1.6v1.6h-1.6zM697.7 552.6h1.6v1.6h-1.6zM698.9 553.6h1.6v1.6h-1.6zM700.0 552.7h1.6v1.6h-1.6zM701.2 553.8h1.6v1.6h-1.6zM702.3 553.0h1.6v1.6h-1.6zM703.4 552.3h1.6v1.6h-1.6zM704.5 552.1h1.6v1.6h-1.6zM705.8 553.8h1.6v1.6h-1.6zM706.8 552.5h1.6v1.6h-1.6zM708.1 553.8h1.6v1.6h-1.6zM709.2 552.9h1.6v1.6h-1.6zM710.4 554.0h1.6v1.6h-1.6zM711.4 552.3h1.6v1.6h-1.6zM712.5 552.1h1.6v1.6h-1.6zM713.7 552.0h1.6v1.6h-1.6zM714.9 553.4h1.6v1.6h-1.6zM716.0 552.8h1.6v1.6h-1.6zM717.1 552.0h1.6v1.6h-1.6zM718.1 551.2h1.6v1.6h-1.6zM719.4 552.6h1.6v1.6h-1.6zM720.6 553.3h1.6v1.6h-1.6zM721.7 552.2h1.6v1.6h-1.6zM722.6 550.5h1.6v1.6h-1.6zM723.8 550.5h1.6v1.6h-1.6zM724.9 550.6h1.6v1.6h-1.6zM726.0 550.6h1.6v1.6h-1.6zM727.1 550.2h1.6v1.6h-1.6zM728.3 550.1h1.6v1.6h-1.6zM729.6 551.6h1.6v1.6h-1.6zM730.7 552.1h1.6v1.6h-1.6zM731.7 550.2h1.6v1.6h-1.6zM733.0 552.1h1.6v1.6h-1.6zM734.0 550.7h1.6v1.6h-1.6zM735.2 551.4h1.6v1.6h-1.6zM736.4 551.6h1.6v1.6h-1.6zM737.5 551.5h1.6v1.6h-1.6zM738.4 549.1h1.6v1.6h-1.6zM739.6 549.7h1.6v1.6h-1.6zM740.8 550.3h1.6v1.6h-1.6zM742.0 551.1h1.6v1.6h-1.6zM742.9 548.8h1.6v1.6h-1.6zM744.1 549.2h1.6v1.6h-1.6zM745.4 550.5h1.6v1.6h-1.6zM746.3 548.5h1.6v1.6h-1.6zM747.5 549.1h1.6v1.6h-1.6zM748.6 548.8h1.6v1.6h-1.6zM749.8 549.6h1.6v1.6h-1.6zM750.9 550.1h1.6v1.6h-1.6zM751.8 548.1h1.6v1.6h-1.6zM753.1 549.4h1.6v1.6h-1.6zM754.2 549.3h1.6v1.6h-1.6zM755.3 549.4h1.6v1.6h-1.6zM756.4 548.6h1.6v1.6h-1.6zM757.6 549.4h1.6v1.6h-1.6zM758.5 547.9h1.6v1.6h-1.6zM759.6 547.9h1.6v1.6h-1.6zM760.7 547.3h1.6v1.6h-1.6zM762.0 548.6h1.6v1.6h-1.6zM763.0 547.7h1.6v1.6h-1.6zM764.0 547.1h1.6v1.6h-1.6zM765.1 546.7h1.6v1.6h-1.6zM766.4 548.0h1.6v1.6h-1.6zM767.4 547.6h1.6v1.6h-1.6zM768.6 547.7h1.6v1.6h-1.6zM769.6 546.8h1.6v1.6h-1.6zM770.7 546.9h1.6v1.6h-1.6zM771.7 546.0h1.6v1.6h-1.6zM773.0 547.3h1.6v1.6h-1.6zM773.9 545.4h1.6v1.6h-1.6zM775.1 546.4h1.6v1.6h-1.6zM776.3 547.1h1.6v1.6h-1.6zM777.4 546.7h1.6v1.6h-1.6zM778.4 545.1h1.6v1.6h-1.6zM779.5 545.4h1.6v1.6h-1.6zM780.8 546.8h1.6v1.6h-1.6zM781.8 546.2h1.6v1.6h-1.6zM783.0 559.6h1.6v1.6h-1.6zM784.1 559.4h1.6v1.6h-1.6zM785.1 558.2h1.6v1.6h-1.6zM786.4 559.2h1.6v1.6h-1.6zM787.4 558.6h1.6v1.6h-1.6zM788.4 557.4h1.6v1.6h-1.6zM789.5 557.3h1.6v1.6h-1.6zM790.5 556.4h1.6v1.6h-1.6zM791.8 557.1h1.6v1.6h-1.6zM793.1 558.4h1.6v1.6h-1.6zM793.9 556.0h1.6v1.6h-1.6zM795.2 557.1h1.6v1.6h-1.6zM796.1 555.8h1.6v1.6h-1.6zM797.2 555.5h1.6v1.6h-1.6zM798.5 556.8h1.6v1.6h-1.6zM799.6 555.6h1.6v1.6h-1.6zM800.8 555.2h1.6v1.6h-1.6zM802.0 555.5h1.6v1.6h-1.6zM803.1 556.9h1.6v1.6h-1.6zM804.3 556.8h1.6v1.6h-1.6zM805.5 555.3h1.6v1.6h-1.6zM806.7 556.0h1.6v1.6h-1.6zM807.7 557.9h1.6v1.6h-1.6zM809.0 556.1h1.6v1.6h-1.6zM810.1 557.0h1.6v1.6h-1.6zM811.3 556.7h1.6v1.6h-1.6zM812.4 557.7h1.6v1.6h-1.6zM813.6 557.3h1.6v1.6h-1.6zM822.8 541.0h1.6v1.6h-1.6zM823.4 539.8h1.6v1.6h-1.6zM823.9 538.4h1.6v1.6h-1.6zM824.8 537.8h1.6v1.6h-1.6zM825.7 536.9h1.6v1.6h-1.6zM827.7 537.9h1.6v1.6h-1.6zM827.7 535.7h1.6v1.6h-1.6zM828.5 534.8h1.6v1.6h-1.6zM830.8 536.2h1.6v1.6h-1.6zM830.7 533.9h1.6v1.6h-1.6zM832.7 534.7h1.6v1.6h-1.6zM832.5 532.4h1.6v1.6h-1.6zM834.0 532.5h1.6v1.6h-1.6zM834.6 531.4h1.6v1.6h-1.6zM837.2 524.5h1.6v1.6h-1.6zM838.5 524.5h1.6v1.6h-1.6zM839.4 525.0h1.6v1.6h-1.6zM840.3 525.8h1.6v1.6h-1.6zM841.2 526.6h1.6v1.6h-1.6zM842.8 525.8h1.6v1.6h-1.6zM839.0 534.5h1.6v1.6h-1.6zM840.1 534.7h1.6v1.6h-1.6zM841.5 534.6h1.6v1.6h-1.6zM841.5 536.8h1.6v1.6h-1.6zM842.7 536.8h1.6v1.6h-1.6zM843.4 537.8h1.6v1.6h-1.6zM845.2 537.1h1.6v1.6h-1.6zM845.7 538.4h1.6v1.6h-1.6zM846.7 538.8h1.6v1.6h-1.6zM847.3 539.9h1.6v1.6h-1.6zM849.1 539.0h1.6v1.6h-1.6zM849.7 540.2h1.6v1.6h-1.6zM850.4 541.1h1.6v1.6h-1.6zM851.9 540.7h1.6v1.6h-1.6zM852.2 542.4h1.6v1.6h-1.6zM852.9 543.4h1.6v1.6h-1.6zM580.6 456.8h1.6v1.6h-1.6zM580.2 458.0h1.6v1.6h-1.6zM580.5 459.2h1.6v1.6h-1.6zM581.6 460.2h1.6v1.6h-1.6zM581.5 461.5h1.6v1.6h-1.6zM580.0 462.9h1.6v1.6h-1.6zM581.8 463.8h1.6v1.6h-1.6zM581.7 465.0h1.6v1.6h-1.6zM582.8 466.1h1.6v1.6h-1.6zM582.6 467.3h1.6v1.6h-1.6zM582.9 468.4h1.6v1.6h-1.6zM581.1 469.8h1.6v1.6h-1.6zM581.7 470.8h1.6v1.6h-1.6zM581.5 472.0h1.6v1.6h-1.6zM581.3 473.1h1.6v1.6h-1.6zM582.4 474.1h1.6v1.6h-1.6zM581.7 475.3h1.6v1.6h-1.6zM582.9 476.3h1.6v1.6h-1.6zM583.3 477.4h1.6v1.6h-1.6zM582.1 478.6h1.6v1.6h-1.6zM582.4 479.7h1.6v1.6h-1.6zM582.4 480.9h1.6v1.6h-1.6zM583.7 481.9h1.6v1.6h-1.6zM583.1 483.2h1.6v1.6h-1.6zM584.1 484.3h1.6v1.6h-1.6zM582.7 485.6h1.6v1.6h-1.6zM583.1 486.7h1.6v1.6h-1.6zM584.8 487.7h1.6v1.6h-1.6zM583.3 489.1h1.6v1.6h-1.6zM585.3 490.0h1.6v1.6h-1.6zM585.7 491.2h1.6v1.6h-1.6zM584.2 492.5h1.6v1.6h-1.6zM585.4 493.6h1.6v1.6h-1.6zM585.0 494.8h1.6v1.6h-1.6zM584.9 496.0h1.6v1.6h-1.6zM586.6 496.7h1.6v1.6h-1.6zM585.0 498.2h1.6v1.6h-1.6zM586.4 499.0h1.6v1.6h-1.6zM586.2 500.2h1.6v1.6h-1.6zM586.7 501.2h1.6v1.6h-1.6zM585.9 502.5h1.6v1.6h-1.6zM586.1 503.6h1.6v1.6h-1.6zM587.5 504.5h1.6v1.6h-1.6zM588.2 505.5h1.6v1.6h-1.6zM587.9 506.6h1.6v1.6h-1.6zM587.8 507.8h1.6v1.6h-1.6zM588.9 508.7h1.6v1.6h-1.6zM588.9 509.8h1.6v1.6h-1.6zM587.6 511.3h1.6v1.6h-1.6zM588.0 512.3h1.6v1.6h-1.6zM587.6 513.6h1.6v1.6h-1.6zM587.9 514.7h1.6v1.6h-1.6zM588.4 515.7h1.6v1.6h-1.6zM590.0 516.5h1.6v1.6h-1.6zM590.8 517.5h1.6v1.6h-1.6zM590.7 518.7h1.6v1.6h-1.6zM590.5 519.9h1.6v1.6h-1.6zM590.7 521.0h1.6v1.6h-1.6zM590.9 535.8h1.6v1.6h-1.6zM591.5 536.9h1.6v1.6h-1.6zM590.4 538.1h1.6v1.6h-1.6zM592.0 539.1h1.6v1.6h-1.6zM591.7 540.2h1.6v1.6h-1.6zM590.7 541.5h1.6v1.6h-1.6zM591.1 542.6h1.6v1.6h-1.6zM592.5 543.5h1.6v1.6h-1.6zM592.8 544.6h1.6v1.6h-1.6zM591.5 545.9h1.6v1.6h-1.6zM593.7 546.7h1.6v1.6h-1.6zM600.2 557.6h1.6v1.6h-1.6zM601.3 558.7h1.6v1.6h-1.6zM602.4 558.7h1.6v1.6h-1.6zM603.5 557.7h1.6v1.6h-1.6zM604.6 557.4h1.6v1.6h-1.6zM605.7 557.8h1.6v1.6h-1.6zM606.8 559.3h1.6v1.6h-1.6zM607.9 558.5h1.6v1.6h-1.6zM609.0 559.8h1.6v1.6h-1.6zM610.1 559.3h1.6v1.6h-1.6zM611.2 559.8h1.6v1.6h-1.6zM612.3 557.4h1.6v1.6h-1.6zM613.4 557.8h1.6v1.6h-1.6zM614.6 557.3h1.6v1.6h-1.6zM615.7 558.4h1.6v1.6h-1.6zM616.8 558.2h1.6v1.6h-1.6zM617.9 557.4h1.6v1.6h-1.6zM619.0 558.7h1.6v1.6h-1.6zM620.1 557.5h1.6v1.6h-1.6zM621.2 558.1h1.6v1.6h-1.6zM622.3 557.9h1.6v1.6h-1.6zM623.4 559.4h1.6v1.6h-1.6zM624.5 558.4h1.6v1.6h-1.6zM625.6 558.0h1.6v1.6h-1.6zM626.7 557.4h1.6v1.6h-1.6zM627.8 558.4h1.6v1.6h-1.6zM628.9 558.9h1.6v1.6h-1.6zM630.0 559.1h1.6v1.6h-1.6zM631.1 559.7h1.6v1.6h-1.6zM632.2 559.4h1.6v1.6h-1.6zM633.3 557.9h1.6v1.6h-1.6zM634.4 557.7h1.6v1.6h-1.6zM635.5 559.3h1.6v1.6h-1.6zM636.6 559.4h1.6v1.6h-1.6zM637.7 558.6h1.6v1.6h-1.6zM638.8 559.5h1.6v1.6h-1.6zM639.9 558.7h1.6v1.6h-1.6zM641.0 558.0h1.6v1.6h-1.6zM642.1 557.7h1.6v1.6h-1.6zM643.3 557.3h1.6v1.6h-1.6zM644.4 559.0h1.6v1.6h-1.6zM645.5 559.6h1.6v1.6h-1.6zM646.6 559.7h1.6v1.6h-1.6zM647.7 558.5h1.6v1.6h-1.6zM648.8 559.0h1.6v1.6h-1.6zM649.9 559.7h1.6v1.6h-1.6zM651.0 559.4h1.6v1.6h-1.6zM652.1 558.9h1.6v1.6h-1.6zM653.2 558.4h1.6v1.6h-1.6zM654.3 558.6h1.6v1.6h-1.6zM655.4 557.7h1.6v1.6h-1.6zM656.5 557.8h1.6v1.6h-1.6zM657.6 559.1h1.6v1.6h-1.6zM658.7 559.9h1.6v1.6h-1.6zM659.8 558.7h1.6v1.6h-1.6zM660.9 558.4h1.6v1.6h-1.6zM662.0 558.2h1.6v1.6h-1.6zM663.1 558.5h1.6v1.6h-1.6zM664.2 559.4h1.6v1.6h-1.6zM665.3 558.5h1.6v1.6h-1.6zM666.4 559.8h1.6v1.6h-1.6zM667.5 557.7h1.6v1.6h-1.6zM668.6 558.1h1.6v1.6h-1.6zM669.7 558.7h1.6v1.6h-1.6zM670.8 558.4h1.6v1.6h-1.6zM672.0 559.5h1.6v1.6h-1.6zM673.1 559.5h1.6v1.6h-1.6zM674.2 559.7h1.6v1.6h-1.6zM675.3 558.9h1.6v1.6h-1.6zM676.4 557.4h1.6v1.6h-1.6zM677.5 558.8h1.6v1.6h-1.6zM678.6 558.7h1.6v1.6h-1.6zM679.7 558.6h1.6v1.6h-1.6zM680.8 558.0h1.6v1.6h-1.6zM681.9 559.1h1.6v1.6h-1.6zM683.0 559.7h1.6v1.6h-1.6zM684.1 557.6h1.6v1.6h-1.6zM691.3 556.0h1.6v1.6h-1.6zM692.4 555.1h1.6v1.6h-1.6zM693.5 555.4h1.6v1.6h-1.6zM694.7 556.2h1.6v1.6h-1.6zM695.9 556.3h1.6v1.6h-1.6zM696.9 555.3h1.6v1.6h-1.6zM697.8 554.1h1.6v1.6h-1.6zM699.2 555.8h1.6v1.6h-1.6zM700.1 553.8h1.6v1.6h-1.6zM701.2 554.2h1.6v1.6h-1.6zM702.4 555.2h1.6v1.6h-1.6zM703.4 553.8h1.6v1.6h-1.6zM704.5 553.5h1.6v1.6h-1.6zM705.8 555.1h1.6v1.6h-1.6zM706.9 555.0h1.6v1.6h-1.6zM707.8 553.3h1.6v1.6h-1.6zM709.0 553.3h1.6v1.6h-1.6zM710.0 552.9h1.6v1.6h-1.6zM711.1 552.4h1.6v1.6h-1.6zM712.2 552.6h1.6v1.6h-1.6zM713.5 554.4h1.6v1.6h-1.6zM714.4 551.9h1.6v1.6h-1.6zM715.5 552.2h1.6v1.6h-1.6zM716.6 552.0h1.6v1.6h-1.6zM717.7 551.5h1.6v1.6h-1.6zM718.9 552.6h1.6v1.6h-1.6zM720.1 553.0h1.6v1.6h-1.6zM721.2 553.1h1.6v1.6h-1.6zM722.3 552.5h1.6v1.6h-1.6zM723.4 552.8h1.6v1.6h-1.6zM724.3 550.6h1.6v1.6h-1.6zM725.5 551.2h1.6v1.6h-1.6zM726.8 552.8h1.6v1.6h-1.6zM727.7 550.4h1.6v1.6h-1.6zM728.8 550.8h1.6v1.6h-1.6zM730.0 551.2h1.6v1.6h-1.6zM731.0 550.5h1.6v1.6h-1.6zM791.2 558.8h1.6v1.6h-1.6zM792.2 557.4h1.6v1.6h-1.6zM793.4 557.8h1.6v1.6h-1.6zM794.7 559.6h1.6v1.6h-1.6zM795.7 557.3h1.6v1.6h-1.6zM797.0 559.2h1.6v1.6h-1.6zM797.9 557.2h1.6v1.6h-1.6zM799.3 559.2h1.6v1.6h-1.6zM800.3 558.3h1.6v1.6h-1.6zM801.5 558.1h1.6v1.6h-1.6zM802.5 556.7h1.6v1.6h-1.6zM803.6 556.3h1.6v1.6h-1.6zM804.9 558.1h1.6v1.6h-1.6zM805.9 556.4h1.6v1.6h-1.6zM807.0 556.4h1.6v1.6h-1.6zM808.3 557.9h1.6v1.6h-1.6zM809.5 557.9h1.6v1.6h-1.6zM810.4 555.7h1.6v1.6h-1.6zM811.7 557.9h1.6v1.6h-1.6zM812.8 556.7h1.6v1.6h-1.6zM863.8 553.9h1.6v1.6h-1.6zM865.2 553.7h1.6v1.6h-1.6zM865.9 554.8h1.6v1.6h-1.6zM866.4 556.7h1.6v1.6h-1.6zM868.2 555.4h1.6v1.6h-1.6zM869.4 555.5h1.6v1.6h-1.6zM870.5 555.9h1.6v1.6h-1.6zM874.2 726.8h1.6v1.6h-1.6zM875.1 727.6h1.6v1.6h-1.6zM875.8 729.3h1.6v1.6h-1.6zM877.5 727.5h1.6v1.6h-1.6zM878.5 728.1h1.6v1.6h-1.6zM934.5 818.4h1.6v1.6h-1.6zM935.6 818.5h1.6v1.6h-1.6zM936.7 818.4h1.6v1.6h-1.6zM937.7 816.4h1.6v1.6h-1.6zM938.8 816.6h1.6v1.6h-1.6zM940.0 818.1h1.6v1.6h-1.6zM941.0 816.8h1.6v1.6h-1.6zM942.1 817.3h1.6v1.6h-1.6zM943.2 816.2h1.6v1.6h-1.6zM944.2 815.3h1.6v1.6h-1.6z"/>
<g fill="#ff8a10"><rect x="777.1" y="330.1" width="1.8" height="1.8"/><rect x="779.1" y="340.1" width="1.8" height="1.8"/><rect x="780.1" y="349.6" width="1.8" height="1.8"/><rect x="781.8" y="358.1" width="1.8" height="1.8"/><rect x="783.7" y="369.6" width="1.8" height="1.8"/><rect x="977.5" y="454.6" width="1.8" height="1.8"/><rect x="952.1" y="460.1" width="1.8" height="1.8"/><rect x="961.4" y="457.1" width="1.8" height="1.8"/><rect x="930.8" y="465.6" width="1.8" height="1.8"/><rect x="937.8" y="463.9" width="1.8" height="1.8"/><rect x="931.7" y="519.8" width="1.8" height="1.8"/><rect x="946.1" y="523.9" width="1.8" height="1.8"/><rect x="965.8" y="529.1" width="1.8" height="1.8"/></g>
<g fill="#ffc010"><rect x="822" y="579.7" width="2" height="2"/><rect x="825" y="586.5" width="2" height="2"/><rect x="827.3" y="591.8" width="2" height="2"/><rect x="836.3" y="591.8" width="2" height="2"/><rect x="837.8" y="595.5" width="2" height="2"/><rect x="831" y="602.3" width="2" height="2"/><rect x="839.3" y="602.3" width="2" height="2"/><rect x="840.1" y="607.6" width="2" height="2"/><rect x="845.4" y="610.6" width="2" height="2"/><rect x="852.2" y="594.8" width="2" height="2"/><rect x="853.7" y="599.3" width="2" height="2"/><rect x="858.2" y="609.1" width="2" height="2"/><rect x="835.6" y="616.7" width="2" height="2"/><rect x="846.9" y="628" width="2" height="2"/><rect x="877.3" y="741.9" width="2" height="2"/><rect x="894.9" y="770.7" width="2" height="2"/><rect x="898.8" y="777" width="2" height="2"/><rect x="902" y="780.9" width="2" height="2"/></g>
<path d="M936.8 771.7L937.5 776.4L934.4 785L934.7 789.8" fill="none" stroke="#ff2a10" stroke-width="1.6" stroke-dasharray="2 2"/>

<g font-family="Liberation Sans" font-size="22" fill="#fff">
<text x="697" y="291">1</text><text x="891" y="458">0</text><text x="556" y="474">2</text><text x="565" y="535">3</text>
</g>
<g>
<circle cx="722" cy="288" r="6" fill="#666" fill-opacity="0.7"/><circle cx="720" cy="287" r="6" fill="#8a0a14"/><circle cx="722" cy="288.5" r="3.8" fill="#c84878"/>
<circle cx="917" cy="455" r="6" fill="#666" fill-opacity="0.7"/><circle cx="915.5" cy="454" r="6" fill="#8a0a14"/><circle cx="917" cy="455" r="3.5" fill="#a02080"/>
<circle cx="582" cy="469" r="6" fill="#777" fill-opacity="0.8"/><circle cx="579.5" cy="469" r="5.8" fill="#a00c1c"/><circle cx="582" cy="469" r="3.5" fill="#d05078"/>
<circle cx="590" cy="531" r="6" fill="#777" fill-opacity="0.6"/><circle cx="589" cy="530.5" r="6" fill="#8a0a14"/>
</g>
<g font-family="Liberation Sans" font-size="13" fill="#fff" fill-opacity="0.95">
<text x="755" y="501">base_footprint</text><text x="768" y="501">base_link</text><text x="776" y="501">laser</text>
</g>
<rect x="766" y="489.5" width="61" height="3" fill="#10dd10"/>
<rect x="795" y="461" width="3" height="60" fill="#ee0000"/>
<rect x="795.5" y="490" width="2" height="2" fill="#3030e0"/>
</g>
</svg>
</body></html>
